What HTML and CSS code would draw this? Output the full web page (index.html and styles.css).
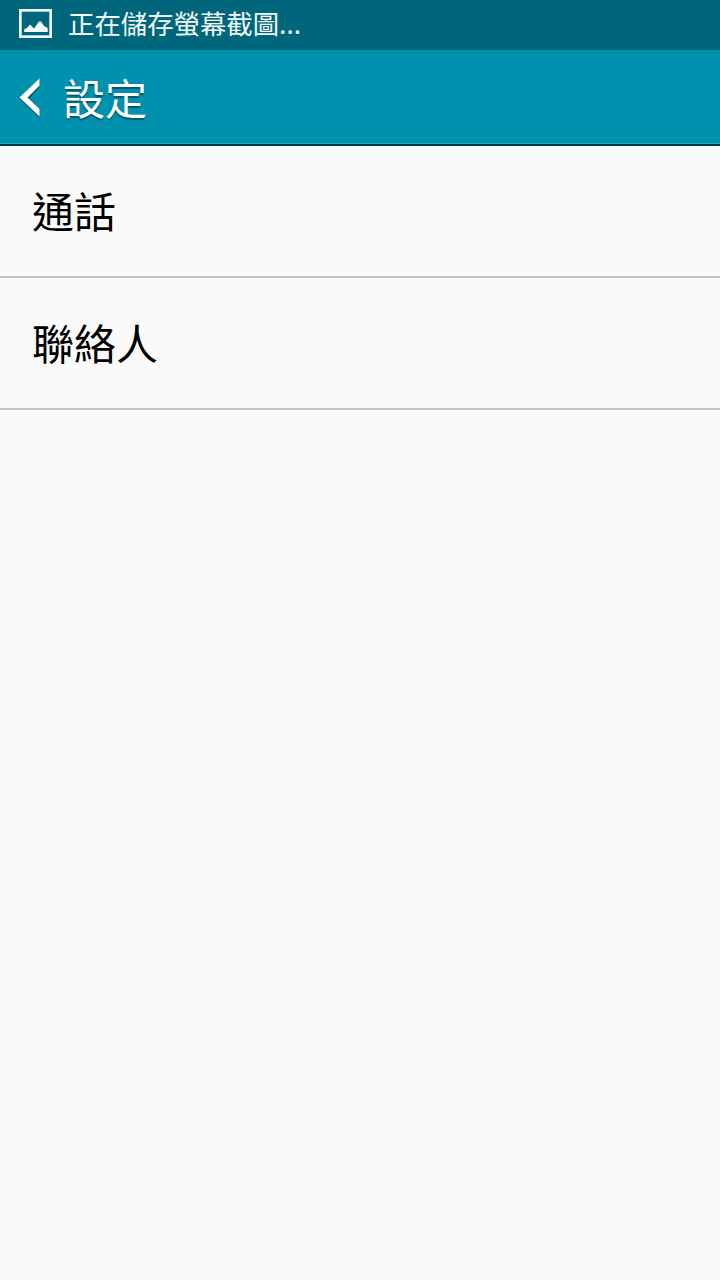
FILE: index.html
```html
<!DOCTYPE html>
<html lang="zh-Hant">
<head>
    <meta charset="UTF-8">
    <meta name="viewport" content="width=device-width, initial-scale=1.0">
    <title>設定</title>
    <link rel="stylesheet" href="styles.css">
</head>
<body>
    <div class="page">
        <div class="status-bar">
            <svg class="status-icon" width="34" height="30" viewBox="0 0 34 30">
                <rect x="1.35" y="1.35" width="30.3" height="26.3" fill="none" stroke="#eef7f9" stroke-width="2.7"/>
                <path d="M5 23 L5.500 20 L8 19 L11 15.500 L15 19.500 L20 12.500 L22 12.500 L25 17 L28.700 19 L28.700 23 Z" fill="#f4fafb"/>
            </svg>
            <span class="status-text">正在儲存螢幕截圖...</span>
        </div>
        <div class="action-bar">
            <svg class="back-icon" width="24" height="42" viewBox="0 0 24 42">
                <polygon class="back-shadow" points="21.500,4 21.500,11 11.500,22.500 21.500,33 21.500,42 1.500,22.500"/>
                <polygon class="back-line" points="21.500,2.500 21.500,9.500 9.500,21.500 21.500,33 21.500,40.500 1.500,21.500"/>
            </svg>
            <h1 class="title">設定</h1>
        </div>
        <div class="settings-list">
            <div class="settings-row">通話</div>
            <div class="settings-row">聯絡人</div>
        </div>
    </div>
</body>
</html>
```

FILE: styles.css
```css
body {
    margin: 0;
    background-color: #fafafa;
    font-family: "Noto Sans CJK TC", "Liberation Sans", sans-serif;
}

.page {
    height: 1280px;
    overflow: hidden;
}

.status-bar {
    display: flex;
    align-items: center;
    height: 50px;
    padding-left: 19px;
    background-color: #00667c;
    color: #f4fafb;
}

.status-icon {
    margin-right: 15px;
    margin-bottom: 2px;
}

.status-text {
    font-size: 26.4px;
    line-height: 50px;
    margin-bottom: 5px;
}

.action-bar {
    display: flex;
    align-items: center;
    height: 94px;
    padding-left: 18px;
    background-color: #0091ae;
    border-bottom: 2px solid #003a4c;
    box-shadow: inset 0 -1px 0 #2aa4bd;
}

.back-icon {
    margin-right: 21px;
}

.back-line {
    fill: #ffffff;
}

.back-shadow {
    fill: #005a6c;
}

.title {
    margin: 0 0 2px;
    font-size: 42px;
    font-weight: 400;
    color: #ffffff;
    text-shadow: 0 2px 1px #00596b;
}

.settings-row {
    display: flex;
    align-items: center;
    box-sizing: border-box;
    height: 132px;
    padding: 0 0 4px 32px;
    border-bottom: 2px solid #bcc6d2;
    font-size: 42px;
    color: #000000;
}
```
